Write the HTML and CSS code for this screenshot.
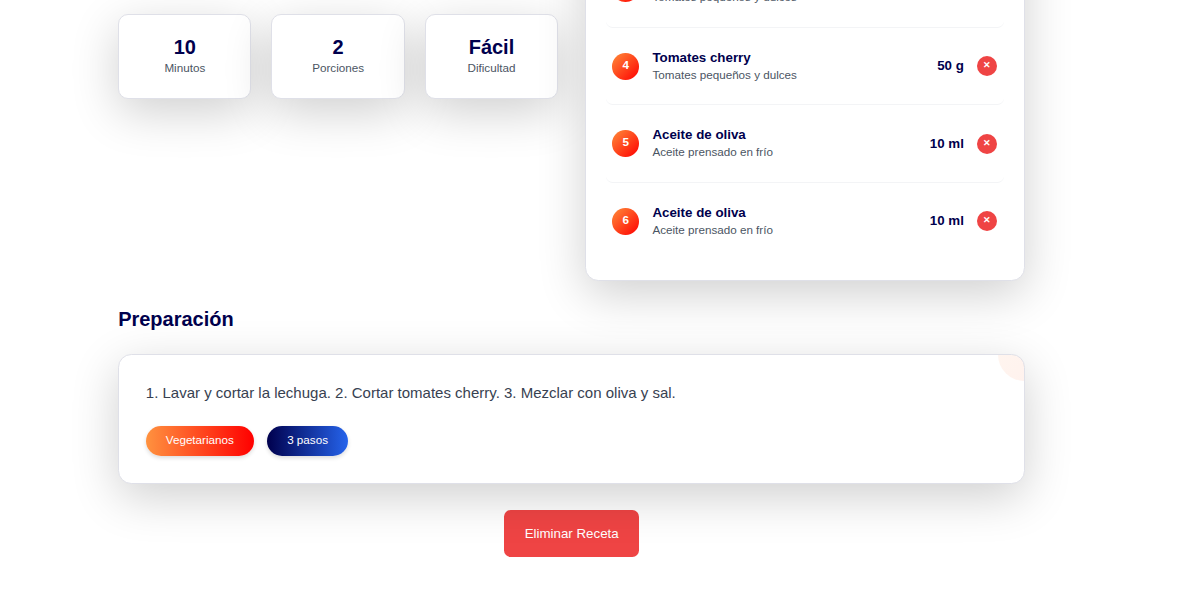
FILE: index.html
```html
<!DOCTYPE html>
<html lang="es">
<head>
<meta charset="utf-8">
<title>Receta</title>
<link rel="stylesheet" href="styles.css">
</head>
<body>
<main class="page">
  <section class="overview">
    <div class="stats">
      <div class="stat"><div class="stat-value">10</div><div class="stat-label">Minutos</div></div>
      <div class="stat"><div class="stat-value">2</div><div class="stat-label">Porciones</div></div>
      <div class="stat"><div class="stat-value">Fácil</div><div class="stat-label">Dificultad</div></div>
    </div>
    <ul class="ingredients">
      <li class="ingredient">
        <span class="number">3</span>
        <div class="info"><div class="name">Tomates cherry</div><div class="desc">Tomates pequeños y dulces</div></div>
        <span class="amount">50 g</span><button class="remove">✕</button>
      </li>
      <li class="ingredient">
        <span class="number">4</span>
        <div class="info"><div class="name">Tomates cherry</div><div class="desc">Tomates pequeños y dulces</div></div>
        <span class="amount">50 g</span><button class="remove">✕</button>
      </li>
      <li class="ingredient">
        <span class="number">5</span>
        <div class="info"><div class="name">Aceite de oliva</div><div class="desc">Aceite prensado en frío</div></div>
        <span class="amount">10 ml</span><button class="remove">✕</button>
      </li>
      <li class="ingredient">
        <span class="number">6</span>
        <div class="info"><div class="name">Aceite de oliva</div><div class="desc">Aceite prensado en frío</div></div>
        <span class="amount">10 ml</span><button class="remove">✕</button>
      </li>
    </ul>
  </section>
  <h2 class="heading">Preparación</h2>
  <section class="steps">
    <p class="steps-text">1. Lavar y cortar la lechuga. 2. Cortar tomates cherry. 3. Mezclar con oliva y sal.</p>
    <div class="tags"><span class="tag tag-warm">Vegetarianos</span><span class="tag tag-cool">3 pasos</span></div>
  </section>
  <div class="actions"><button class="delete">Eliminar Receta</button></div>
</main>
</body>
</html>
```
FILE: styles.css
```css
html {
  font-size: 13.3333px;
}

*, *::before {
  box-sizing: border-box;
}

body {
  margin: 0;
  height: 594px;
  overflow: hidden;
  background: #fff;
  font-family: "Liberation Sans", Arial, sans-serif;
}

button {
  border: 0;
  padding: 0;
  font-family: inherit;
}

.page {
  display: flow-root;
  width: 906.67px;
  margin-left: 118.15px;
}

.overview {
  display: grid;
  grid-template-columns: 1fr 1fr;
  gap: 2rem;
  align-items: start;
}

.stats {
  display: grid;
  grid-template-columns: repeat(3, 1fr);
  gap: 1.5rem;
  padding-top: 13.8px;
}

.stat,
.ingredients,
.steps {
  position: relative;
  background: #fff;
  border: 1px solid #dfe0e8;
  box-shadow: 0 13px 47px rgba(0, 0, 0, 0.19);
}

.stat {
  padding: 1.5rem;
  border-radius: 10px;
  text-align: center;
}

.stat-value {
  font-size: 1.5rem;
  line-height: 1.83rem;
  font-weight: 700;
  color: #00004d;
}

.stat-label {
  font-size: 0.875rem;
  line-height: 1.42rem;
  color: #4b5563;
}

.ingredients {
  list-style: none;
  margin: -70.7px 0 0;
  padding: 1.5rem;
  border-radius: 13.33px;
}

.ingredient {
  display: flex;
  align-items: center;
  height: 77.6px;
  padding: 0 0.5rem;
  border-bottom: 1px solid #f3f4f6;
  border-radius: 6.67px;
}

.ingredient:last-child {
  height: 76.6px;
  border-bottom: 0;
}

.number {
  width: 2rem;
  height: 2rem;
  margin-right: 1rem;
  border-radius: 50%;
  background: linear-gradient(135deg, #ff8c3a, #ff0000);
  color: #fff;
  font-size: 0.875rem;
  line-height: 1.8rem;
  font-weight: 700;
  text-align: center;
}

.info {
  flex: 1;
}

.name {
  font-size: 1rem;
  line-height: 1.5rem;
  font-weight: 700;
  color: #00004d;
}

.desc {
  padding-bottom: 0.15rem;
  font-size: 0.875rem;
  line-height: 1.1rem;
  color: #4b5563;
}

.amount {
  margin-right: 1rem;
  font-size: 1rem;
  line-height: 1.5rem;
  font-weight: 700;
  color: #00004d;
}

.remove {
  width: 1.5rem;
  height: 1.5rem;
  padding: 0 0 2px 0.6px;
  border-radius: 50%;
  background: #ef4444;
  color: #fff;
  font-size: 9px;
  line-height: 1.2rem;
  font-weight: 700;
}

.heading {
  margin: 25.2px 0 21.4px;
  font-size: 1.5rem;
  line-height: 2rem;
  color: #00004d;
}

.steps {
  padding: 2rem;
  border-radius: 13.33px;
  overflow: hidden;
}

.steps::before {
  content: "";
  position: absolute;
  top: -2.05rem;
  right: -2.05rem;
  width: 4rem;
  height: 4rem;
  border-radius: 50%;
  background: linear-gradient(135deg, #ff923f, #ff4a1c);
  opacity: 0.08;
}

.steps-text {
  margin: 0 0 22.2px;
  font-size: 15px;
  line-height: 22.2px;
  color: #374151;
}

.tags {
  display: flex;
  gap: 1rem;
}

.tag {
  padding: 6.1px 1.5rem 7.2px;
  border-radius: 15px;
  color: #fff;
  font-size: 0.875rem;
  line-height: 1.25rem;
  box-shadow: 0 2px 4px rgba(0, 0, 0, 0.14);
}

.tag-warm {
  background: linear-gradient(90deg, #ff923f, #ff0000);
}

.tag-cool {
  background: linear-gradient(90deg, #00004d, #2563eb);
}

.actions {
  display: flex;
  justify-content: center;
  margin-top: 2rem;
}

.delete {
  padding: 1rem 20.1px 1rem 20.5px;
  border-radius: 6.67px;
  background: #ef4444;
  color: #fff;
  font-size: 1rem;
  line-height: 1.5rem;
}
```
